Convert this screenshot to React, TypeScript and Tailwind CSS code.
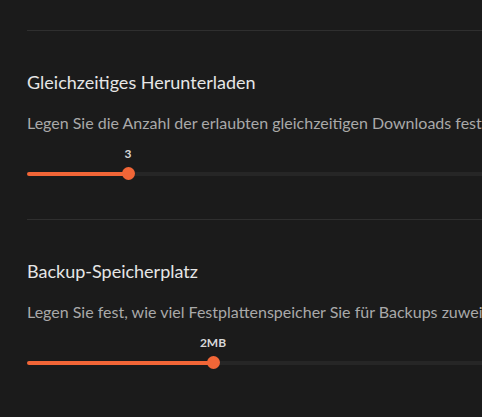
import React from 'react'

type SliderProps = {
  label: string
  offset: string
}

// offset = width of the filled part, thumb centre sits at its end
function Slider({ label, offset }: SliderProps) {
  return (
    <div className="flex flex-col">
      <div className="flex h-[14px]">
        <div className={`shrink-0 ${offset}`} />
        <span className="-translate-x-1/2 text-[12px] font-bold leading-[14px] text-[#d8d8d8]">{label}</span>
      </div>
      <div className="mt-[6px] flex h-[13px] items-center">
        <div className={`h-[4px] shrink-0 rounded-l-full bg-[#f26637] ${offset}`} />
        <div className="relative z-10 -ml-[6px] h-[13px] w-[13px] shrink-0 rounded-full bg-[#f26637]" />
        <div className="-ml-[7px] h-[4px] flex-1 bg-[#262626]" />
      </div>
    </div>
  )
}

function Section({
  title,
  description,
  children,
}: {
  title: string
  description: string
  children: React.ReactNode
}) {
  return (
    <div className="flex flex-col border-t border-[#2f2f2f] pt-[38px] pb-[39px]">
      <h2 className="text-[18px] leading-[26px] text-[#e6e6e6]">{title}</h2>
      <p className="mt-[17px] whitespace-nowrap text-[16px] leading-[22px] text-[#a9a9a9]">{description}</p>
      <div className="mt-[13px]">{children}</div>
    </div>
  )
}

export default function App() {
  return (
    <div
      className="h-[417px] w-full overflow-hidden bg-[#1b1b1b] pl-[27px] pt-[30px]"
      style={{ fontFamily: 'Lato, "Noto Sans", sans-serif' }}
    >
      <div className="flex w-[640px] flex-col">
        <Section
          title="Gleichzeitiges Herunterladen"
          description="Legen Sie die Anzahl der erlaubten gleichzeitigen Downloads fest."
        >
          <Slider label="3" offset="w-[101px]" />
        </Section>
        <Section
          title="Backup-Speicherplatz"
          description="Legen Sie fest, wie viel Festplattenspeicher Sie für Backups zuweisen möchten."
        >
          <Slider label="2MB" offset="w-[186px]" />
        </Section>
      </div>
    </div>
  )
}
